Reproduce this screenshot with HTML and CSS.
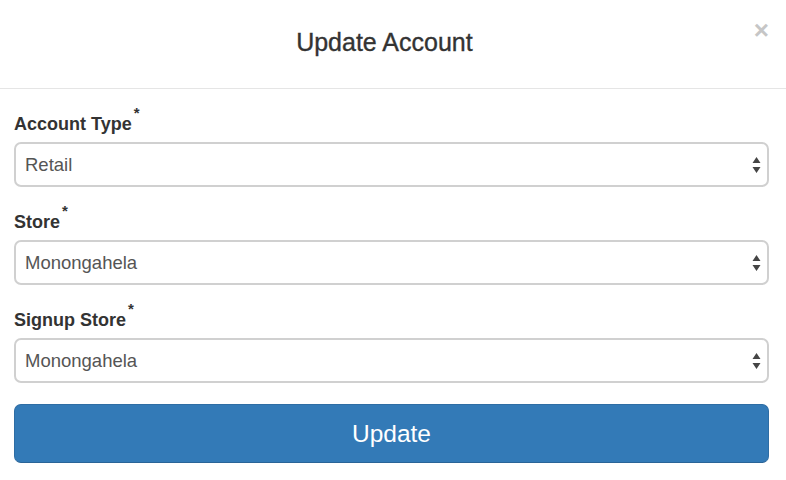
FILE: index.html
```html
<!DOCTYPE html>
<html lang="en">
<head>
<meta charset="utf-8">
<title>Update Account</title>
<link rel="stylesheet" href="styles.css">
</head>
<body>
<div class="modal">
  <div class="modal-header">
    <h4 class="modal-title">Update Account</h4>
    <button class="close" type="button" aria-label="Close">×</button>
  </div>
  <form class="modal-body">
    <div class="form-group">
      <label class="label">Account Type<sup class="req">*</sup></label>
      <div class="select">
        <span class="select-value">Retail</span>
        <svg class="select-arrows" width="9" height="16" viewBox="0 0 9 16"><path d="M4.5 0 L8.5 6 L0.5 6 Z M4.5 16 L8.5 10 L0.5 10 Z" fill="#454545"/></svg>
      </div>
    </div>
    <div class="form-group">
      <label class="label">Store<sup class="req">*</sup></label>
      <div class="select">
        <span class="select-value">Monongahela</span>
        <svg class="select-arrows" width="9" height="16" viewBox="0 0 9 16"><path d="M4.5 0 L8.5 6 L0.5 6 Z M4.5 16 L8.5 10 L0.5 10 Z" fill="#454545"/></svg>
      </div>
    </div>
    <div class="form-group">
      <label class="label">Signup Store<sup class="req">*</sup></label>
      <div class="select">
        <span class="select-value">Monongahela</span>
        <svg class="select-arrows" width="9" height="16" viewBox="0 0 9 16"><path d="M4.5 0 L8.5 6 L0.5 6 Z M4.5 16 L8.5 10 L0.5 10 Z" fill="#454545"/></svg>
      </div>
    </div>
    <button class="btn-primary" type="button">Update</button>
  </form>
</div>
</body>
</html>
```
FILE: styles.css
```css
* { box-sizing: border-box; }
html, body {
  margin: 0;
  padding: 0;
  background: #fff;
  font-family: "Liberation Sans", Arial, sans-serif;
  color: #333;
}
.modal {
  width: 786px;
  height: 480px;
  background: #fff;
}
.modal-header {
  display: flex;
  align-items: flex-start;
  padding: 22px 17px 26px 15px;
  border-bottom: 1px solid #e5e5e5;
  height: 89px;
}
.modal-title {
  flex: 1;
  margin: 0;
  text-align: center;
  font-size: 25px;
  line-height: 40px;
  font-weight: normal;
  color: #333;
  -webkit-text-stroke: 0.35px #333;
}
.close {
  margin: -5px 0 0 0;
  padding: 0;
  border: 0;
  background: none;
  font-family: "Liberation Sans", Arial, sans-serif;
  font-size: 26px;
  line-height: 26px;
  font-weight: bold;
  color: #c6c6c6;
  cursor: pointer;
}
.modal-body {
  display: flex;
  flex-direction: column;
  padding: 22px 17px 0 14px;
  margin: 0;
}
.form-group {
  display: flex;
  flex-direction: column;
  margin-bottom: 22px;
}
.form-group:last-of-type { margin-bottom: 21px; }
.label {
  font-size: 18px;
  line-height: 26px;
  font-weight: bold;
  color: #333;
  margin-bottom: 5px;
}
.req {
  font-size: 15px;
  line-height: 0;
  position: relative;
  top: -5px;
  margin-left: 2px;
}
.select {
  display: flex;
  align-items: center;
  justify-content: space-between;
  height: 45px;
  padding: 0 6px 0 9px;
  border: 2px solid #d0d0d0;
  border-radius: 7px;
  background: #fff;
}
.select-value {
  font-size: 18.5px;
  color: #555;
}
.select-arrows { display: block; }
.btn-primary {
  display: block;
  width: 100%;
  height: 59px;
  padding: 0;
  border: 1px solid #2e6da4;
  border-bottom-color: #2a6497;
  border-radius: 7px;
  background: #337ab7;
  color: #fff;
  font-family: "Liberation Sans", Arial, sans-serif;
  font-size: 24.5px;
  line-height: 57px;
  cursor: pointer;
}
```
